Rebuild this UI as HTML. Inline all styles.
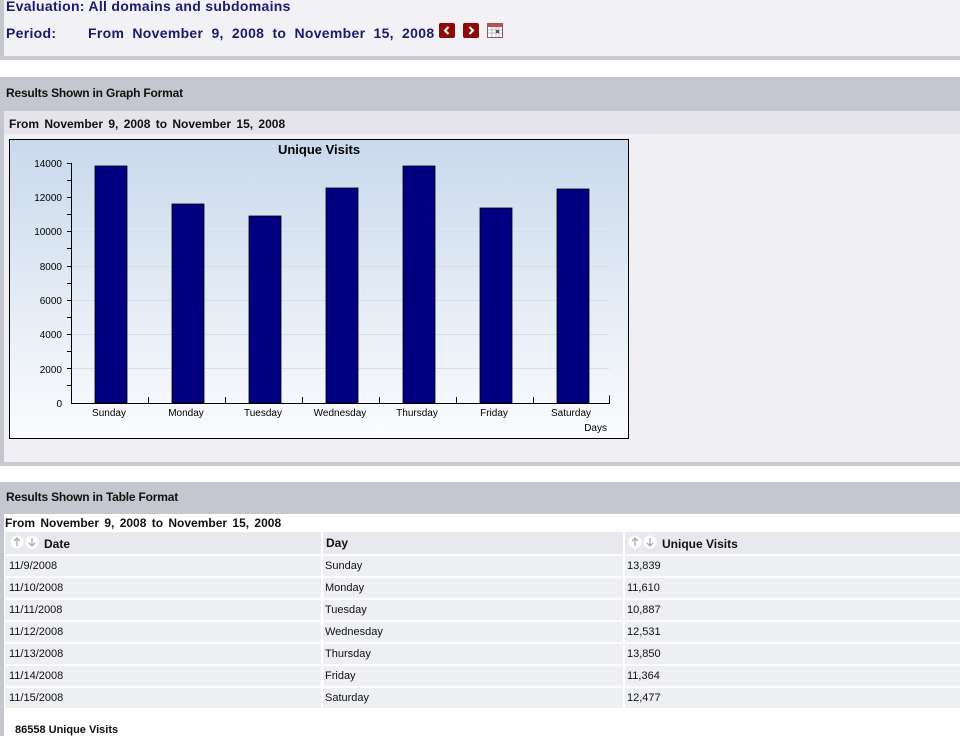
<!DOCTYPE html>
<html><head><style>
body{margin:0;width:960px;height:736px;overflow:hidden;background:#fff;font-family:"Liberation Sans",Arial,sans-serif;position:relative}
.a{position:absolute}
.t{white-space:nowrap}
</style></head><body>
<!-- top panel -->
<div class="a" style="left:0;top:0;width:960px;height:56px;background:#f2f2f6"></div>
<div class="a" style="left:0;top:0;width:4px;height:56px;background:#c4c6ce"></div>
<div class="a" style="left:0;top:56px;width:960px;height:4px;background:#c8cad2"></div>
<div class="a t" style="left:6px;top:-2px;font-size:14px;letter-spacing:0.3px;font-weight:bold;color:#1a1a6e">Evaluation: All domains and subdomains</div>
<div class="a t" style="left:6px;top:25px;font-size:14px;letter-spacing:0.3px;font-weight:bold;color:#1a1a6e">Period:</div>
<div class="a t" style="left:88px;top:25px;font-size:14px;letter-spacing:0.3px;font-weight:bold;color:#1a1a6e;word-spacing:4px">From November 9, 2008 to November 15, 2008</div>
<svg class="a" style="left:439px;top:23px" width="16" height="15"><rect width="16" height="15" rx="2" fill="#8b0a0a"/><path d="M9.5 4L6 7.5 9.5 11" stroke="#fff" stroke-width="2" fill="none"/></svg>
<svg class="a" style="left:463px;top:23px" width="16" height="15"><rect width="16" height="15" rx="2" fill="#8b0a0a"/><path d="M6.5 4L10 7.5 6.5 11" stroke="#fff" stroke-width="2" fill="none"/></svg>
<svg class="a" style="left:487px;top:23px" width="16" height="15"><rect x="0.5" y="0.5" width="15" height="14" fill="#fff" stroke="#8b5a5a"/><rect x="1" y="1" width="14" height="3" fill="#c05050"/><path d="M1 7h14M1 10h14M5 4v10M9 4v10M12 4v10" stroke="#aaa" stroke-width="0.8"/><rect x="9" y="7" width="3" height="3" fill="#555"/></svg>

<!-- graph section -->
<div class="a" style="left:0;top:77px;width:960px;height:34px;background:#c4c7d0"></div>
<div class="a t" style="left:6px;top:86px;font-size:12px;font-weight:bold;color:#111;letter-spacing:-0.2px">Results Shown in Graph Format</div>
<div class="a" style="left:0;top:111px;width:960px;height:351px;background:#f0f0f4"></div>
<div class="a" style="left:0;top:111px;width:4px;height:351px;background:#c4c6ce"></div>
<div class="a" style="left:4px;top:111px;width:956px;height:23px;background:#e4e4ea"></div>
<div class="a t" style="left:9px;top:117px;font-size:12px;font-weight:bold;color:#111;word-spacing:2px">From November 9, 2008 to November 15, 2008</div>
<div class="a" style="left:0;top:462px;width:960px;height:4px;background:#c8cad2"></div>

<svg class="a" style="left:9px;top:139px" width="620" height="300" font-family="'DejaVu Sans',sans-serif">
<defs><linearGradient id="g" x1="0" y1="0" x2="0" y2="1"><stop offset="0" stop-color="#c9d9ec"/><stop offset="1" stop-color="#fbfcfe"/></linearGradient></defs>
<rect x="0.5" y="0.5" width="619" height="299" fill="url(#g)" stroke="#000"/>
<text x="310" y="15" font-size="13" font-weight="bold" text-anchor="middle" font-family="'Liberation Sans',sans-serif">Unique Visits</text>
<g stroke="#d8dde6" stroke-width="1">
<path d="M62 58.5h538M62 92.5h538M62 127.5h538M62 161.5h538M62 195.5h538M62 229.5h538"/>
</g>
<g font-size="10" text-anchor="end" fill="#000" font-family="'Liberation Sans',sans-serif">
<text x="53" y="28">14000</text><text x="53" y="62">12000</text><text x="53" y="96">10000</text><text x="53" y="131">8000</text><text x="53" y="165">6000</text><text x="53" y="199">4000</text><text x="53" y="234">2000</text><text x="53" y="268">0</text>
</g>
<g fill="#000080" stroke="#000" stroke-width="0.8">
<rect x="86" y="27" width="32" height="237"/>
<rect x="163" y="65" width="32" height="199"/>
<rect x="240" y="77" width="32" height="187"/>
<rect x="317" y="49" width="32" height="215"/>
<rect x="394" y="27" width="32" height="237"/>
<rect x="471" y="69" width="32" height="195"/>
<rect x="548" y="50" width="32" height="214"/>
</g>
<path d="M62.5 24v240.5H600.5v-8M139.5 264v-6M216.5 264v-6M293.5 264v-6M370.5 264v-6M447.5 264v-6M524.5 264v-6" stroke="#000" fill="none"/>
<path d="M58 24.5h4M58 41.5h4M58 58.5h4M58 75.5h4M58 92.5h4M58 109.5h4M58 127.5h4M58 144.5h4M58 161.5h4M58 178.5h4M58 195.5h4M58 212.5h4M58 229.5h4M58 246.5h4" stroke="#000"/>
<g font-size="10" text-anchor="middle" font-family="'Liberation Sans',sans-serif">
<text x="100" y="277">Sunday</text><text x="177" y="277">Monday</text><text x="254" y="277">Tuesday</text><text x="331" y="277">Wednesday</text><text x="408" y="277">Thursday</text><text x="485" y="277">Friday</text><text x="562" y="277">Saturday</text>
<text x="598" y="292" text-anchor="end">Days</text>
</g>
</svg>

<!-- table section -->
<div class="a" style="left:0;top:482px;width:960px;height:32px;background:#c4c7d0"></div>
<div class="a t" style="left:6px;top:490px;font-size:12px;font-weight:bold;color:#111;letter-spacing:-0.2px">Results Shown in Table Format</div>
<div class="a" style="left:0;top:514px;width:4px;height:222px;background:#c4c6ce"></div>
<div class="a t" style="left:5px;top:516px;font-size:12px;font-weight:bold;color:#111;word-spacing:2px">From November 9, 2008 to November 15, 2008</div>
<div class="a" style="left:5px;top:532px;width:955px;height:22px;background:#e8e9ee"></div>
<svg class="a" style="left:9px;top:535px" width="32" height="14"><circle cx="8" cy="7" r="6.5" fill="#fff"/><circle cx="23" cy="7" r="6.5" fill="#fff"/><path d="M8 11V3M5 6l3-3 3 3M23 3v8M20 8l3 3 3-3" stroke="#aaa" stroke-width="1.3" fill="none"/></svg>
<div class="a t" style="left:44px;top:537px;font-size:12px;font-weight:bold;color:#111">Date</div>
<div class="a t" style="left:326px;top:536px;font-size:12px;font-weight:bold;color:#111">Day</div>
<svg class="a" style="left:627px;top:535px" width="32" height="14"><circle cx="8" cy="7" r="6.5" fill="#fff"/><circle cx="23" cy="7" r="6.5" fill="#fff"/><path d="M8 11V3M5 6l3-3 3 3M23 3v8M20 8l3 3 3-3" stroke="#aaa" stroke-width="1.3" fill="none"/></svg>
<div class="a t" style="left:662px;top:537px;font-size:12px;font-weight:bold;color:#111">Unique Visits</div>
<div class="a" style="left:5px;top:556px;width:955px;font-size:11px;color:#111">
<div style="position:relative;height:20px;background:#eeeff2;margin-bottom:2px"><span class="a" style="left:4px;top:4px">11/9/2008</span><span class="a" style="left:320px;top:4px">Sunday</span><span class="a" style="left:622px;top:4px">13,839</span></div>
<div style="position:relative;height:20px;background:#eeeff2;margin-bottom:2px"><span class="a" style="left:4px;top:4px">11/10/2008</span><span class="a" style="left:320px;top:4px">Monday</span><span class="a" style="left:622px;top:4px">11,610</span></div>
<div style="position:relative;height:20px;background:#eeeff2;margin-bottom:2px"><span class="a" style="left:4px;top:4px">11/11/2008</span><span class="a" style="left:320px;top:4px">Tuesday</span><span class="a" style="left:622px;top:4px">10,887</span></div>
<div style="position:relative;height:20px;background:#eeeff2;margin-bottom:2px"><span class="a" style="left:4px;top:4px">11/12/2008</span><span class="a" style="left:320px;top:4px">Wednesday</span><span class="a" style="left:622px;top:4px">12,531</span></div>
<div style="position:relative;height:20px;background:#eeeff2;margin-bottom:2px"><span class="a" style="left:4px;top:4px">11/13/2008</span><span class="a" style="left:320px;top:4px">Thursday</span><span class="a" style="left:622px;top:4px">13,850</span></div>
<div style="position:relative;height:20px;background:#eeeff2;margin-bottom:2px"><span class="a" style="left:4px;top:4px">11/14/2008</span><span class="a" style="left:320px;top:4px">Friday</span><span class="a" style="left:622px;top:4px">11,364</span></div>
<div style="position:relative;height:20px;background:#eeeff2;margin-bottom:2px"><span class="a" style="left:4px;top:4px">11/15/2008</span><span class="a" style="left:320px;top:4px">Saturday</span><span class="a" style="left:622px;top:4px">12,477</span></div>
</div>
<div class="a" style="left:321px;top:532px;width:2px;height:176px;background:#fff"></div>
<div class="a" style="left:623px;top:532px;width:2px;height:176px;background:#fff"></div>
<div class="a t" style="left:15px;top:724px;font-size:11px;font-weight:bold;color:#111">86558 Unique Visits</div>
</body></html>
